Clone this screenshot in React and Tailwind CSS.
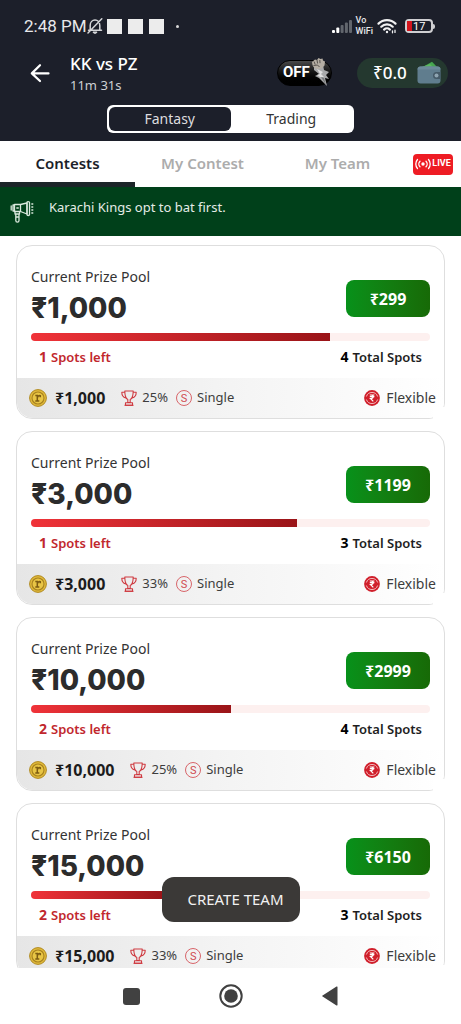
import { useState } from "react";

const contests = [
  { id: 1, prize: "1,000", entry: "299", left: 1, total: 4, winners: "25%" },
  { id: 2, prize: "3,000", entry: "1199", left: 1, total: 3, winners: "33%" },
  { id: 3, prize: "10,000", entry: "2999", left: 2, total: 4, winners: "25%" },
  { id: 4, prize: "15,000", entry: "6150", left: 2, total: 3, winners: "33%" },
];

const tabs = ["Contests", "My Contest", "My Team"];

// Icons
const BellOffIcon = () => (
  <svg className="h-4 w-4" viewBox="0 0 16 16" fill="none" stroke="#d4d5d8" strokeWidth="1.5" strokeLinecap="round">
    <path d="M3.2 11.8V7.4c0-3.200 2.200-5.400 4.800-5.400s4.800 2.200 4.800 5.400v4.400M1.500 12.200h13M14.800 .8 1 15" />
    <path d="M6 14.200h4l-2 1z" fill="#d4d5d8" />
  </svg>
);

const SignalIcon = () => (
  <svg className="h-4 w-5" viewBox="0 0 20 16">
    <rect x="0" y="12" width="3" height="3" rx="1" fill="#fff" />
    <rect x="4.300" y="9.500" width="3" height="5.500" rx="1" fill="#fff" />
    <rect x="8.600" y="7" width="3" height="8" rx="1" fill="#62666d" />
    <rect x="12.900" y="4.500" width="3" height="10.500" rx="1" fill="#62666d" />
    <rect x="17" y="2" width="3" height="13" rx="1" fill="#62666d" />
  </svg>
);

const WifiIcon = () => (
  <svg className="h-4 w-5" viewBox="0 0 20 16" fill="none" stroke="#f1f1f2" strokeWidth="2.200" strokeLinecap="round">
    <path d="M1.500 5.600a12 12 0 0 1 17 0M4.300 8.700a8 8 0 0 1 11.400 0M7.100 11.600a4.200 4.200 0 0 1 5.800 0" />
    <circle cx="10" cy="14" r="1.200" fill="#f1f1f2" stroke="none" />
    <path d="M15.500 12.800v2M18 12.200v2.200" strokeWidth="1.300" />
  </svg>
);

const BackIcon = () => (
  <svg className="h-5 w-5" viewBox="0 0 20 20" fill="none" stroke="#fff" strokeWidth="2.200" strokeLinecap="round" strokeLinejoin="round">
    <path d="M18.500 10.400H1.800M10 2.200 1.800 10.400l8.200 7.600" />
  </svg>
);

const BoltFistIcon = () => (
  <svg className="absolute -top-1 right-0 h-8 w-6" viewBox="0 0 24 32">
    <path d="M7 9l9-1 1 5 5 2-3 3 3 4-4-1 2 8-8-8-4-2 4-2-5-4z" fill="#a9aaab" />
    <path d="M10 12l6 3-2 2 4 4-5-1-3-2 3-1z" fill="#e0e0e0" />
    <path d="M14 20l5 1h-2l2 7z" fill="#77797b" />
    <path d="M5 5 8 2.500l2 .5 1.500-2 2 1 2-.5.500 2 2 1-.5 4-3 3-5 .5-3-2-1-2z" fill="#b5aea3" />
    <path d="M7 4.500l1.200 3M10 3l.6 3.500M12.800 3l.2 3.200M6.500 8.500l4-.5 2 2" stroke="#57524d" strokeWidth="1" fill="none" />
  </svg>
);

const WalletIcon = () => (
  <svg className="h-6 w-6" viewBox="0 0 24 24">
    <path d="M4 7 15 .8 21 7z" fill="#46a650" />
    <path d="M2 7 13 3l4 4z" fill="#5cb860" />
    <rect x="0.500" y="5.500" width="23" height="17" rx="3" fill="#607d8e" />
    <path d="M.5 8.500c0-2 1.500-3 3-3h17c2 0 3 1 3 3z" fill="#6d8a9a" />
    <path d="M23.500 11h-4a3.500 3.500 0 0 0 0 7h4z" fill="#455a68" />
    <circle cx="19.500" cy="14.500" r="2" fill="#8fa5b2" />
  </svg>
);

const BroadcastIcon = () => (
  <svg className="h-3 w-4" viewBox="0 0 16 12" fill="none" stroke="#fff" strokeWidth="1.300" strokeLinecap="round">
    <circle cx="8" cy="6" r="1.700" fill="#fff" stroke="none" />
    <path d="M5 3.200a4 4 0 0 0 0 5.600M11 3.200a4 4 0 0 1 0 5.600M2.500 1.500a6.800 6.800 0 0 0 0 9M13.500 1.500a6.800 6.800 0 0 1 0 9" />
  </svg>
);

const MegaphoneIcon = () => (
  <svg className="h-6 w-6" viewBox="0 0 24 24" fill="none" stroke="#d9e8dd" strokeWidth="1.300" strokeLinejoin="round" strokeLinecap="round">
    <path d="M4.500 4.500h6L17 3v11l-6.500-2.500h-6zM4.500 5H3v6h1.500M1.200 6v4M10.500 4.500v7" />
    <path d="M17 2.500c0-1.300 2.500-1.300 2.500 0v12c0 1.300-2.500 1.300-2.500 0z" />
    <path d="M5 11.500V14h4.500v-2M5.800 14v6.500a1.600 1.600 0 0 0 3.200 0V14M5.800 17H9M6.800 8h1.500M21.800 4h1M21.800 7h1M21.800 10h1M21.800 13h1" />
  </svg>
);

const CoinIcon = () => (
  <svg className="h-[18px] w-[18px]" viewBox="0 0 18 18">
    <circle cx="9" cy="9" r="8.400" fill="#e0b93a" stroke="#b08a22" />
    <circle cx="9" cy="9" r="6" fill="#e8c545" stroke="#a8821f" strokeWidth="1.100" />
    <path d="M6.300 6.500h2V12M6.300 12h4M8.500 8.500c.4-1.500 1.400-2.200 2.800-1.800v1.500" fill="none" stroke="#7d5c12" strokeWidth="1.500" />
  </svg>
);

const TrophyIcon = () => (
  <svg className="h-4 w-4" viewBox="0 0 16 16" fill="none" stroke="#cf3a40" strokeWidth="1.100" strokeLinejoin="round">
    <path d="M3.800 1h8.400c0 4-.8 7.500-3 8.600v3H6.800v-3C4.600 8.500 3.800 5 3.800 1zM3.800 2.300H.8c0 3 1.200 5 4 5.700M12.200 2.300h3c0 3-1.200 5-4 5.700M4.500 12.800h7v2.500h-7z" />
    <path d="M3.500 15.300h9" />
  </svg>
);

const SingleIcon = () => (
  <span className="flex h-4 w-4 items-center justify-center rounded-full border border-[#d8656a] font-[Roboto] text-[11px] leading-none text-[#d04a50]">
    S
  </span>
);

const FlexibleIcon = () => (
  <svg className="h-4 w-4" viewBox="0 0 16 16" fill="none">
    <circle cx="8" cy="8" r="7.900" fill="#d01f2b" />
    <path d="M2.400 6.500a5.900 5.900 0 0 1 11.200 0M13.600 9.500a5.900 5.900 0 0 1-11.200 0" stroke="#f6c9cb" strokeWidth=".9" />
    <path d="M5.800 5h4.600M5.800 6.700h4.600M6.500 5c3.600 0 3.600 3.500 0 3.500l2.800 2.800" stroke="#fff" strokeWidth="1.200" />
  </svg>
);

const StatusBar = () => (
  <div className="flex h-[50px] items-center justify-between px-6 pt-[2px]">
    <div className="flex items-center">
      <span className="font-[Roboto] text-[17px] leading-5 text-[#e8e8ea]">2:48 PM</span>
      <BellOffIcon />
      <div className="ml-1 flex gap-[6px]">
        <span className="h-[15px] w-[15px] bg-[#ececec]" />
        <span className="h-[15px] w-[15px] bg-[#ececec]" />
        <span className="h-[15px] w-[15px] bg-[#ececec]" />
      </div>
      <span className="ml-3 h-[3px] w-[3px] rounded-full bg-[#d8d8d8]" />
    </div>
    <div className="flex items-center gap-1 pr-[2px]">
      <SignalIcon />
      <div className="flex flex-col font-[Roboto] text-[9px] font-medium leading-[11px] text-[#e8e8ea]">
        <span>Vo</span>
        <span>WiFi</span>
      </div>
      <WifiIcon />
      <div className="ml-1 flex items-center">
        <div className="flex h-[14px] w-7 items-center rounded-[4px] border-2 border-[#cfcfd2] font-[Roboto] text-[11px] leading-none text-white">
          <span className="mr-px h-[10px] w-[5px] bg-[#d3141c]" />
          17
        </div>
        <span className="h-[5px] w-[2px] rounded-r bg-[#cfcfd2]" />
      </div>
    </div>
  </div>
);

const ContestCard = ({ contest }) => {
  const filled = ((contest.total - contest.left) / contest.total) * 100;

  return (
    <article className="relative rounded-2xl border border-[#dedede] bg-white">
      <div className="px-[14px] pt-[22px]">
        <div className="flex justify-between">
          <div>
            <p className="text-sm leading-[18px] text-[#333]">Current Prize Pool</p>
            <p className="mt-1 font-[Inter] text-[28px] font-extrabold leading-9 text-[#2c2c2c]">₹{contest.prize}</p>
          </div>
          <button
            type="button"
            className="mt-3 h-[37px] w-[84px] rounded-lg bg-linear-to-r from-[#07911a] to-[#176a07] text-base font-bold text-white"
          >
            ₹{contest.entry}
          </button>
        </div>
        <div className="mt-[7px] h-2 overflow-hidden rounded-full bg-[#fdf0ef]">
          <div className="h-full bg-linear-to-r from-[#f03339] to-[#9a1418]" style={{ width: `${filled}%` }} />
        </div>
        <div className="mb-[5px] flex h-8 items-center justify-between px-2 text-[13px] font-semibold">
          <p className="text-[#c1272d]">
            <span className="mr-1 text-sm font-bold">{contest.left}</span>
            Spots left
          </p>
          <p className="text-[#1e1e1e]">
            <span className="mr-1 text-sm font-bold text-black">{contest.total}</span>
            Total Spots
          </p>
        </div>
      </div>
      <footer className="flex h-10 items-center rounded-b-2xl bg-linear-to-r from-[#e6e6e6] via-[#f4f4f4] to-white pl-3 pr-2 text-[13px] text-[#3d3d3d]">
        <CoinIcon />
        <span className="ml-2 text-base font-bold text-[#1c1c1c]">₹{contest.prize}</span>
        <span className="ml-4 mr-[5px]">
          <TrophyIcon />
        </span>
        {contest.winners}
        <span className="ml-2 mr-[5px]">
          <SingleIcon />
        </span>
        Single
        <span className="ml-auto mr-[6px]">
          <FlexibleIcon />
        </span>
        <span className="text-sm">Flexible</span>
      </footer>
      <span className="absolute -bottom-px -right-px h-3 w-3 bg-white" />
    </article>
  );
};

const App = () => {
  const [activeTab, setActiveTab] = useState("Contests");
  const [mode, setMode] = useState("Fantasy");

  return (
    <div className="flex h-screen flex-col bg-white font-['Noto_Sans','Open_Sans',sans-serif]">
      <header className="bg-[#1c1f2a] pb-2 text-white">
        <StatusBar />
        <div className="flex h-[55px] items-center pb-[10px] pl-[30px] pr-[13px]">
          <button type="button" aria-label="Back">
            <BackIcon />
          </button>
          <div className="ml-5">
            <h1 className="text-[17px] font-medium leading-6">KK vs PZ</h1>
            <p className="text-[13px] leading-[18px] text-[#cfd0d4]">11m 31s</p>
          </div>
          <button
            type="button"
            className="relative ml-auto h-[26px] w-[55px] rounded-full border border-black bg-linear-to-b from-[#4a4a4a] via-[#111] to-black pl-[5px] text-left font-[Roboto] text-[15px] font-bold leading-none"
          >
            OFF
            <BoltFistIcon />
          </button>
          <button
            type="button"
            className="ml-[25px] flex h-[30px] w-[91px] items-center justify-between rounded-full bg-[#24382f] pl-4 pr-[7px]"
          >
            <span className="text-[17px] font-medium">₹0.0</span>
            <WalletIcon />
          </button>
        </div>
        <div className="mx-[107px] flex h-7 rounded-md bg-white p-[2px] text-sm leading-none">
          {["Fantasy", "Trading"].map((item) => (
            <button
              key={item}
              type="button"
              onClick={() => setMode(item)}
              className={`flex-1 rounded-md ${mode === item ? "bg-[#1c1f2a] text-[#dcdcdf]" : "text-[#333]"}`}
            >
              {item}
            </button>
          ))}
        </div>
      </header>

      <nav className="flex h-[46px] shrink-0 bg-white text-[15px] font-semibold">
        {tabs.map((tab) => (
          <button
            key={tab}
            type="button"
            onClick={() => setActiveTab(tab)}
            className={`flex-1 border-b-[5px] pt-1 ${
              activeTab === tab ? "border-[#1c2529] text-[#1c1f2a]" : "border-transparent text-[#acacac]"
            }`}
          >
            {tab}
          </button>
        ))}
        <div className="flex w-14 items-center justify-center">
          <button
            type="button"
            className="flex h-[21px] w-10 items-center justify-center gap-px rounded bg-[#ee1c24] font-[Roboto] text-[9px] font-bold text-white"
          >
            <BroadcastIcon />
            LIVE
          </button>
        </div>
      </nav>

      <div className="flex h-[49px] shrink-0 items-center bg-[#00401a] pl-[10px] text-[13px] text-[#e4ece6]">
        <MegaphoneIcon />
        <p className="mb-2 ml-[15px]">Karachi Kings opt to bat first.</p>
      </div>

      <main className="relative min-h-0 flex-1 overflow-hidden">
        <div className="flex flex-col gap-3 px-4 pt-[9px]">
          {contests.map((contest) => (
            <ContestCard key={contest.id} contest={contest} />
          ))}
        </div>
        <button
          type="button"
          className="absolute bottom-[46px] left-1/2 h-[45px] w-[138px] -translate-x-1/2 whitespace-nowrap rounded-xl bg-[#3b3937] pl-[10px] text-[15px] text-[#f1f1f1]"
        >
          CREATE TEAM
        </button>
      </main>

      <div className="flex h-14 shrink-0 items-center justify-center gap-[79px] bg-white">
        <button type="button" aria-label="Recent apps" className="h-[17px] w-[17px] rounded-[3px] bg-[#414141]" />
        <button type="button" aria-label="Home">
          <svg className="h-6 w-6" viewBox="0 0 24 24">
            <circle cx="12" cy="12" r="10.700" fill="none" stroke="#414141" strokeWidth="2" />
            <circle cx="12" cy="12" r="6.800" fill="#414141" />
          </svg>
        </button>
        <button type="button" aria-label="Go back">
          <svg className="h-5 w-4" viewBox="0 0 16 20">
            <path d="M15.500 1v18a.6.6 0 0 1-1 .4L.6 10.600a.7.7 0 0 1 0-1.200L14.500.6a.6.6 0 0 1 1 .4z" fill="#414141" />
          </svg>
        </button>
      </div>
    </div>
  );
};

export default App;
